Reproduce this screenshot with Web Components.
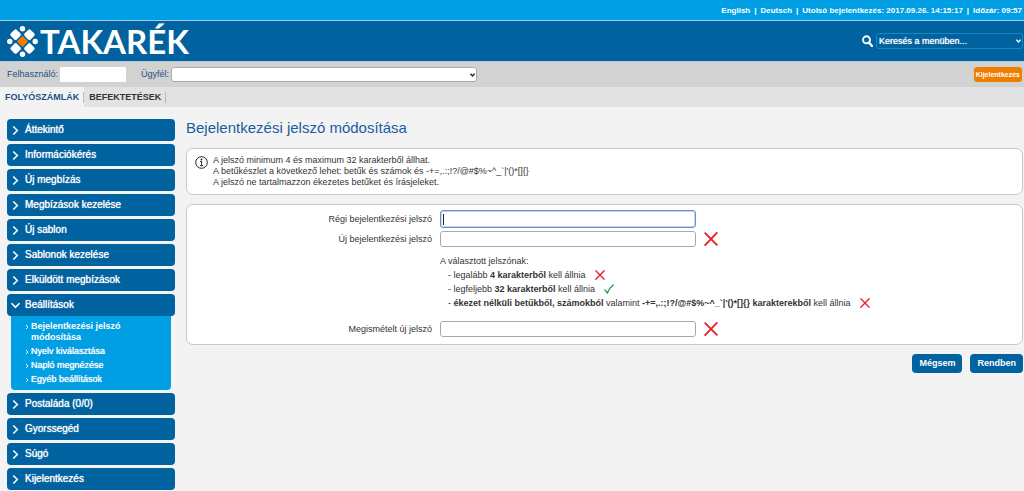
<!DOCTYPE html>
<html lang="hu">
<head>
<meta charset="utf-8">
<title>Bejelentkezési jelszó módosítása</title>
<style>
body { margin: 0; background: #f3f3f3; color: #333; font-family: "Liberation Sans", Arial, sans-serif; font-size: 9px; line-height: 11px; }
</style>
</head>
<body>
<bank-app></bank-app>
<script>
const define = (name, html, setup) => customElements.define(name, class extends HTMLElement {
  connectedCallback() {
    if (this.shadowRoot) return;
    const root = this.attachShadow({ mode: "open" });
    root.innerHTML = "<style>*{box-sizing:border-box}input,select,button{font:inherit}:host([hidden]){display:none}</style>" + html;
    if (setup) setup(this, root);
  }
});

define("status-icon", `
<style>
:host { display: block; flex: none; width: 10px; height: 10px; }
:host([large]) { width: 14px; height: 14px; }
svg { display: block; width: 100%; height: 100%; overflow: visible; }
path { fill: none; stroke: #e3202b; stroke-width: 1.6; stroke-linecap: round; }
path.ok { stroke: #2f9a3c; }
</style>
<svg viewBox="0 0 12 12" aria-hidden="true"><path d="M1 1 11 11M11 .8 1 11.2"/></svg>`,
(el, root) => {
  if (el.getAttribute("kind") === "ok") {
    const p = root.querySelector("path");
    p.setAttribute("class", "ok");
    p.setAttribute("d", "M1 7 4 10.8Q6 5 11.4 1");
  }
});

define("top-bar", `
<style>
:host { display: flex; justify-content: flex-end; align-items: center; height: 20px; padding: 0 2px 0 8px; background: #009ee3; color: #fff; font-weight: bold; font-size: 8px; white-space: pre; }
a { color: inherit; text-decoration: none; }
i { font-style: normal; padding: 0 4px; }
</style>
<a href="#en">English</a><i>|</i><a href="#de">Deutsch</a><i>|</i><span>Utolsó bejelentkezés: 2017.09.26. 14:15:17</span><i>|</i><span>Időzár: 09:57</span>`);

define("brand-logo", `
<style>
:host { display: block; }
a { display: flex; align-items: center; gap: 2px; color: #fff; text-decoration: none; }
svg { display: block; flex: none; }
b { font: bold 33px/36px Lato, sans-serif; }
</style>
<a href="#home"><svg width="31" height="31" viewBox="0 0 31 31" aria-hidden="true">
<g fill="#fff"><circle cx="15.500" cy="2.800" r="2.700"/><circle cx="15.500" cy="28.200" r="2.700"/><circle cx="2.800" cy="15.500" r="2.700"/><circle cx="28.200" cy="15.500" r="2.700"/>
<g transform="rotate(45 15.500 15.500)"><rect x="1.500" y="11.300" width="8.500" height="8.500" rx="1.800"/><rect x="21" y="11.300" width="8.500" height="8.500" rx="1.800"/><rect x="11.300" y="1.500" width="8.500" height="8.500" rx="1.800"/><rect x="11.300" y="21" width="8.500" height="8.500" rx="1.800"/></g></g>
<rect x="11.500" y="11.500" width="8" height="8" rx="1" fill="#ef7d00" transform="rotate(45 15.500 15.500)"/>
</svg><b>TAKARÉK</b></a>`);

define("menu-search", `
<style>
:host { display: flex; align-items: center; gap: 3px; }
label, svg { display: block; }
.box { display: flex; align-items: center; position: relative; }
select { appearance: none; width: 147px; height: 16px; margin: 0; padding: 0 14px 0 2px; background: #00629f; border: 1px solid #1586c8; border-radius: 3px; color: #fff; font-size: 9px; line-height: 14px; text-shadow: 0 0 1px #fff; }
.box svg { position: absolute; right: 2px; pointer-events: none; }
</style>
<label for="s" aria-label="Keresés"><svg width="11" height="12" viewBox="0 0 11 12" fill="none" stroke="#fff"><circle cx="4.500" cy="4.800" r="3.500" stroke-width="1.900"/><path d="M7 7.500 10 11" stroke-width="2.200" stroke-linecap="round"/></svg></label>
<div class="box"><select id="s"><option>Keresés a menüben...</option></select><svg width="5" height="4" viewBox="0 0 5 4" fill="none" stroke="#fff" stroke-width="1.400"><path d="M.4.7 2.500 2.900 4.600.7"/></svg></div>`);

define("brand-header", `
<style>
:host { display: flex; justify-content: space-between; align-items: center; height: 42px; padding: 0 1px 0 7px; background: #00629f; border-top: 1px solid #9fcdf0; border-bottom: 1px solid #b5cfe2; }
</style>
<brand-logo></brand-logo><menu-search></menu-search>`);

define("client-bar", `
<style>
:host { display: flex; align-items: center; height: 25px; padding: 0 2px 0 7px; background: #d2d2d2; color: #1d5184; font-size: 9px; }
input { width: 66px; height: 15px; margin: 0 15px 0 2px; padding: 0 3px; border: 0; background: #fff; }
.box { position: relative; display: flex; align-items: center; flex: 0 1 306px; margin-left: 2px; }
select { appearance: none; width: 100%; height: 15px; margin: 0; padding: 0 16px 0 4px; border: 1px solid #aaa; border-radius: 3px; background: #fff; }
svg { position: absolute; right: 2px; pointer-events: none; }
button { margin: 0 0 0 auto; height: 15px; padding: 0 2px; border: 0; border-radius: 3px; background: #ef7d00; color: #fff; font-size: 7px; font-weight: bold; }
</style>
<label for="u">Felhasználó:</label><input id="u">
<label for="c">Ügyfél:</label><div class="box"><select id="c"><option></option></select><svg width="5" height="4" viewBox="0 0 5 4" fill="none" stroke="#222" stroke-width="1.400"><path d="M.4.7 2.500 2.900 4.600.7"/></svg></div>
<button>Kijelentkezés</button>`);

define("section-tabs", `
<style>
:host { display: flex; height: 20px; background: #e2e2e2; font-size: 9px; line-height: 20px; font-weight: bold; }
a { color: #333; text-decoration: none; padding: 0 5px 0 5px; background: linear-gradient(#bbb, #bbb) right 5px / 1px 11px no-repeat; }
a.on { color: #1d5184; background-color: #f3f3f3; }
</style>
<a class="on" href="#accounts">FOLYÓSZÁMLÁK</a><a href="#investments">BEFEKTETÉSEK</a>`);

define("menu-item", `
<style>
:host { display: block; }
a { display: flex; align-items: center; gap: 6px; height: 22px; padding: 0 5px; border-radius: 4px; background: #00629f; color: #fff; font-size: 10px; line-height: 12px; text-shadow: 0 0 1px #fff; text-decoration: none; }
svg { flex: none; width: 7px; height: 9px; overflow: visible; fill: none; stroke: #fff; stroke-width: 1.6; }
:host([open]) svg { transform: rotate(90deg); }
</style>
<a href="#menu"><svg viewBox="0 0 7 9" aria-hidden="true"><path d="M1.300.5 5.300 4.500 1.300 8.500"/></svg><slot></slot></a><slot name="sub"></slot>`);

define("sub-menu", `
<style>
:host { display: flex; flex-direction: column; gap: 3px; margin: 0 4px; padding: 5px 14px 5px 15px; background: #009ee3; border-radius: 0 0 4px 4px; color: #fff; font-size: 9px; line-height: 11px; }
</style><slot></slot>`);
define("sub-item", `
<style>
:host { display: block; }
a { display: flex; gap: 3px; color: inherit; text-decoration: none; text-shadow: 0 0 1px #fff; }
:host([current]) a { font-weight: bold; text-shadow: none; }
svg { flex: none; width: 2px; height: 4px; margin-top: 4px; overflow: visible; fill: none; stroke: #fff; }
</style>
<a href="#sub"><svg viewBox="0 0 2 4" aria-hidden="true"><path d="M0 0 2 2 0 4"/></svg><span><slot></slot></span></a>`);

define("side-menu", `
<style>
:host { display: flex; flex-direction: column; gap: 3px; flex: none; width: 168px; }
</style>
<menu-item>Áttekintő</menu-item><menu-item>Információkérés</menu-item><menu-item>Új megbízás</menu-item><menu-item>Megbízások kezelése</menu-item><menu-item>Új sablon</menu-item><menu-item>Sablonok kezelése</menu-item><menu-item>Elküldött megbízások</menu-item>
<menu-item open>Beállítások<sub-menu slot="sub"><sub-item current>Bejelentkezési jelszó módosítása</sub-item><sub-item>Nyelv kiválasztása</sub-item><sub-item>Napló megnézése</sub-item><sub-item>Egyéb beállítások</sub-item></sub-menu></menu-item>
<menu-item>Postaláda (0/0)</menu-item><menu-item>Gyorssegéd</menu-item><menu-item>Súgó</menu-item><menu-item>Kijelentkezés</menu-item>`);

define("info-panel", `
<style>
:host { display: flex; gap: 5px; padding: 6px 8px; border: 1px solid #c8c8c8; border-radius: 7px; background: #fff; color: #333; font-size: 9px; line-height: 11px; }
svg { flex: none; margin-top: 1px; }
p { margin: 0; }
</style>
<svg width="13" height="13" viewBox="0 0 13 13" aria-hidden="true"><circle cx="6.500" cy="6.500" r="5.800" fill="none" stroke="#222"/><circle cx="6.500" cy="3.500" r=".9" fill="#222"/><path d="M5 5.500H6.600V9.500M5 9.700H8.200" fill="none" stroke="#222"/></svg>
<div><slot></slot></div>`);

define("password-row", `
<style>
:host { display: grid; grid-template-columns: 245px minmax(0, 256px) auto; column-gap: 8px; align-items: center; height: 20px; }
label { text-align: right; font-size: 9px; }
input { width: 100%; height: 16px; margin: 0; padding: 0 3px; border: 1px solid #aaa; border-radius: 3px; background: #fff; outline: 0; }
:host([active]) input { height: 18px; border-color: #6c8fd2; background: linear-gradient(#222, #222) 2px center / 1px 11px no-repeat #fff; box-shadow: inset 0 0 0 1px #c3d3f0; }
</style>
<label for="p"></label><input id="p" type="password"><slot></slot>`,
(el, root) => { root.querySelector("label").textContent = el.getAttribute("label"); });

define("rule-list", `
<style>
:host { display: block; margin: 5px 0 9px 253px; font-size: 9px; line-height: 14px; }
p { margin: 0; }
ul { margin: 0; padding: 0 0 0 8px; list-style: none; }
li { display: flex; align-items: center; gap: 9px; }
</style>
<p>A választott jelszónak:</p>
<ul><li><span>- legalább <b>4 karakterből</b> kell állnia</span><status-icon></status-icon></li>
<li><span>- legfeljebb <b>32 karakterből</b> kell állnia</span><status-icon kind="ok"></status-icon></li>
<li><span>- <b>ékezet nélküli betűkből, számokból</b> valamint <b>-+=,.:;!?/@#$%~^_\`|'()*[]{} karakterekből</b> kell állnia</span><status-icon></status-icon></li></ul>`);

define("password-form", `
<style>
:host { display: block; }
.panel { padding: 4px 0 5px; border: 1px solid #c8c8c8; border-radius: 7px; background: #fff; }
.actions { display: flex; justify-content: flex-end; gap: 8px; margin-top: 9px; }
button { height: 19px; margin: 0; padding: 0 7px; border: 0; border-radius: 4px; background: #00629f; color: #fff; font-size: 9px; font-weight: bold; }
</style>
<form><div class="panel">
<password-row label="Régi bejelentkezési jelszó" active></password-row>
<password-row label="Új bejelentkezési jelszó"><status-icon large></status-icon></password-row>
<rule-list></rule-list>
<password-row label="Megismételt új jelszó"><status-icon large></status-icon></password-row>
</div>
<div class="actions"><button type="button">Mégsem</button><button type="button">Rendben</button></div></form>`);

define("page-content", `
<style>
:host { display: block; flex: 1; min-width: 0; }
h1 { margin: 0 0 11px; font-size: 15px; line-height: 18px; font-weight: normal; color: #1c5ba2; }
info-panel { margin-bottom: 9px; }
p { margin: 0; }
</style>
<h1>Bejelentkezési jelszó módosítása</h1>
<info-panel><p>A jelszó minimum 4 és maximum 32 karakterből állhat.</p><p>A betűkészlet a következő lehet: betűk és számok és -+=,.:;!?/@#$%~^_\`|'()*[]{}</p><p>A jelszó ne tartalmazzon ékezetes betűket és írásjeleket.</p></info-panel>
<password-form></password-form>`);

define("bank-app", `
<style>
:host { display: block; }
main { display: flex; align-items: flex-start; gap: 11px; padding: 12px 1px 0 7px; }
</style>
<top-bar></top-bar><brand-header></brand-header><client-bar></client-bar><section-tabs></section-tabs>
<main><side-menu></side-menu><page-content></page-content></main>`);
</script>
</body>
</html>
